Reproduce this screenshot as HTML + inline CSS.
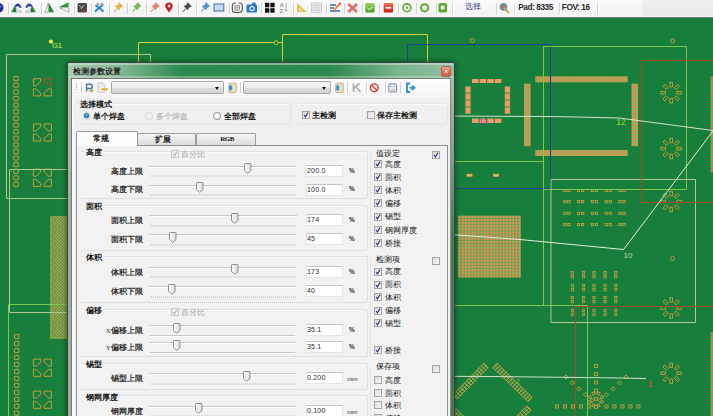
<!DOCTYPE html><html><head><meta charset="utf-8"><style>
*{box-sizing:border-box}
html,body{margin:0;padding:0}
body{width:713px;height:416px;overflow:hidden;position:relative;background:#177f3b;font-family:"Liberation Sans",sans-serif;}
.a{position:absolute}
.t{position:absolute;white-space:nowrap;line-height:1}
.sep{position:absolute;width:1px;background:#d2d2d2;box-shadow:1px 0 0 #fff}
.ed{position:absolute;background:#fff;border:1px solid #e6e6e6;border-top-color:#c6c6c6;font-size:8px;color:#2a2a2a;padding-left:0.5px;line-height:10.2px;letter-spacing:0.2px}
.ed span{display:inline-block;transform:scaleX(0.88);transform-origin:0 50%}
.trk{position:absolute;height:2px;border-top:1px solid #c9c9c9;border-bottom:1px solid #fff;background:#e6e6e6}
.ticks{position:absolute;height:2px;background:repeating-linear-gradient(90deg,#d4d4d4 0 1px,transparent 1px 2px)}
.grp{position:absolute;border:1px solid #e0e0e0;border-left:none;border-radius:0 3px 3px 0;box-shadow:inset 0 1px 0 #fbfbfb}
.tab{position:absolute;border:1px solid #9a9b9b;border-bottom:none;background:linear-gradient(#f6f6f6,#e8e8e8 50%,#dcdcdc);border-radius:2px 2px 0 0}
.combo{position:absolute;border:1px solid #a8a8a8;border-radius:2px;background:linear-gradient(#f6f6f6,#ececec 50%,#dcdcdc 51%,#d4d4d4)}
.combo::after{content:"";position:absolute;right:4px;top:5px;border-left:2.5px solid transparent;border-right:2.5px solid transparent;border-top:3px solid #111}
</style></head><body>
<svg class="a" style="left:0;top:0" width="713" height="416" viewBox="0 0 713 416"><defs>
<pattern id="hx" width="2.9" height="8" patternUnits="userSpaceOnUse" x="535.3"><rect width="2.9" height="8" fill="#5e9444"/><rect x="0" width="1.2" height="8" fill="#f0884c"/><rect x="1.55" width="0.9" height="8" fill="#c9c472"/></pattern>
<pattern id="hy" width="8" height="2.9" patternUnits="userSpaceOnUse" y="83.7"><rect width="8" height="2.9" fill="#5e9444"/><rect y="0" width="8" height="1.2" fill="#f0884c"/><rect y="1.55" width="8" height="0.9" fill="#c9c472"/></pattern>
<pattern id="bga" width="3.15" height="3.15" patternUnits="userSpaceOnUse" x="458" y="215.6"><rect width="3.15" height="3.15" fill="#6e9a48"/><rect x="0.7" y="0.7" width="1.75" height="1.75" fill="#f29060"/><rect x="0" y="0" width="3.15" height="0.5" fill="#b0b060"/></pattern>
<pattern id="bga2" width="6" height="6" patternUnits="userSpaceOnUse" x="50" y="216"><rect width="6" height="6" fill="#4e9442"/><circle cx="1.5" cy="1.5" r="1" fill="none" stroke="#d89a48" stroke-width="0.8"/><circle cx="4.5" cy="1.5" r="1" fill="none" stroke="#a8c060" stroke-width="0.8"/><circle cx="1.5" cy="4.5" r="1" fill="none" stroke="#b8c060" stroke-width="0.8"/><circle cx="4.5" cy="4.5" r="1" fill="none" stroke="#e08a50" stroke-width="0.8"/></pattern>
<pattern id="dg" width="3" height="8" patternUnits="userSpaceOnUse"><rect width="0.9" height="8" fill="#d6a44a"/></pattern>
<g id="ring" fill="none" stroke="#d9a040" stroke-width="0.8"><rect x="-1.3" y="-10.3" width="2.6" height="4.6" transform="rotate(0)"/><rect x="-1.3" y="-10.3" width="2.6" height="4.6" transform="rotate(45)"/><rect x="-1.3" y="-10.3" width="2.6" height="4.6" transform="rotate(90)"/><rect x="-1.3" y="-10.3" width="2.6" height="4.6" transform="rotate(135)"/><rect x="-1.3" y="-10.3" width="2.6" height="4.6" transform="rotate(180)"/><rect x="-1.3" y="-10.3" width="2.6" height="4.6" transform="rotate(225)"/><rect x="-1.3" y="-10.3" width="2.6" height="4.6" transform="rotate(270)"/><rect x="-1.3" y="-10.3" width="2.6" height="4.6" transform="rotate(315)"/></g>
</defs>
<rect x="13.8" y="76.50" width="4.4" height="4.2" rx="0.3" fill="none" stroke="#d9a040" stroke-width="0.9"/>
<rect x="13.8" y="83.12" width="4.4" height="4.2" rx="0.3" fill="none" stroke="#d9a040" stroke-width="0.9"/>
<rect x="13.8" y="89.74" width="4.4" height="4.2" rx="0.3" fill="none" stroke="#d9a040" stroke-width="0.9"/>
<rect x="13.8" y="96.36" width="4.4" height="4.2" rx="0.3" fill="none" stroke="#d9a040" stroke-width="0.9"/>
<rect x="13.8" y="102.98" width="4.4" height="4.2" rx="0.3" fill="none" stroke="#d9a040" stroke-width="0.9"/>
<rect x="13.8" y="109.60" width="4.4" height="4.2" rx="0.3" fill="none" stroke="#d9a040" stroke-width="0.9"/>
<rect x="13.8" y="116.22" width="4.4" height="4.2" rx="0.3" fill="none" stroke="#d9a040" stroke-width="0.9"/>
<rect x="13.8" y="122.84" width="4.4" height="4.2" rx="0.3" fill="none" stroke="#d9a040" stroke-width="0.9"/>
<rect x="13.8" y="129.46" width="4.4" height="4.2" rx="0.3" fill="none" stroke="#d9a040" stroke-width="0.9"/>
<rect x="13.8" y="136.08" width="4.4" height="4.2" rx="0.3" fill="none" stroke="#d9a040" stroke-width="0.9"/>
<rect x="13.8" y="142.70" width="4.4" height="4.2" rx="0.3" fill="none" stroke="#d9a040" stroke-width="0.9"/>
<rect x="13.8" y="149.32" width="4.4" height="4.2" rx="0.3" fill="none" stroke="#d9a040" stroke-width="0.9"/>
<rect x="13.8" y="155.94" width="4.4" height="4.2" rx="0.3" fill="none" stroke="#d9a040" stroke-width="0.9"/>
<rect x="13.8" y="162.56" width="4.4" height="4.2" rx="0.3" fill="none" stroke="#d9a040" stroke-width="0.9"/>
<rect x="13.8" y="169.18" width="4.4" height="4.2" rx="0.3" fill="none" stroke="#d9a040" stroke-width="0.9"/>
<rect x="13.8" y="175.80" width="4.4" height="4.2" rx="0.3" fill="none" stroke="#d9a040" stroke-width="0.9"/>
<rect x="13.8" y="182.42" width="4.4" height="4.2" rx="0.3" fill="none" stroke="#d9a040" stroke-width="0.9"/>
<rect x="14.5" y="334.60" width="4.4" height="4.2" rx="0.3" fill="none" stroke="#d9a040" stroke-width="0.9"/>
<rect x="14.5" y="341.55" width="4.4" height="4.2" rx="0.3" fill="none" stroke="#d9a040" stroke-width="0.9"/>
<rect x="14.5" y="348.50" width="4.4" height="4.2" rx="0.3" fill="none" stroke="#d9a040" stroke-width="0.9"/>
<rect x="14.5" y="355.45" width="4.4" height="4.2" rx="0.3" fill="none" stroke="#d9a040" stroke-width="0.9"/>
<rect x="14.5" y="362.40" width="4.4" height="4.2" rx="0.3" fill="none" stroke="#d9a040" stroke-width="0.9"/>
<rect x="14.5" y="369.35" width="4.4" height="4.2" rx="0.3" fill="none" stroke="#d9a040" stroke-width="0.9"/>
<rect x="14.5" y="376.30" width="4.4" height="4.2" rx="0.3" fill="none" stroke="#d9a040" stroke-width="0.9"/>
<rect x="14.5" y="383.25" width="4.4" height="4.2" rx="0.3" fill="none" stroke="#d9a040" stroke-width="0.9"/>
<rect x="14.5" y="390.20" width="4.4" height="4.2" rx="0.3" fill="none" stroke="#d9a040" stroke-width="0.9"/>
<rect x="14.5" y="397.15" width="4.4" height="4.2" rx="0.3" fill="none" stroke="#d9a040" stroke-width="0.9"/>
<rect x="14.5" y="404.10" width="4.4" height="4.2" rx="0.3" fill="none" stroke="#d9a040" stroke-width="0.9"/>
<rect x="14.5" y="411.05" width="4.4" height="4.2" rx="0.3" fill="none" stroke="#d9a040" stroke-width="0.9"/>
<g fill="none" stroke="#d9a040" stroke-width="0.9">
<path d="M33.40,78.70 H40.70 V81.50 L36.10,85.70 H33.40 Z"/>
<path d="M33.40,78.70 H40.70 V81.50 L36.10,85.70 H33.40 Z" transform="translate(84.8,0) scale(-1,1)" stroke="#c8462a"/>
<path d="M33.40,78.70 H40.70 V81.50 L36.10,85.70 H33.40 Z" transform="translate(0,174.6) scale(1,-1)"/>
<path d="M33.40,78.70 H40.70 V81.50 L36.10,85.70 H33.40 Z" transform="translate(84.8,174.6) scale(-1,-1)"/>
</g>
<g fill="none" stroke="#d9a040" stroke-width="0.9">
<path d="M33.40,123.90 H40.70 V126.70 L36.10,130.90 H33.40 Z"/>
<path d="M33.40,123.90 H40.70 V126.70 L36.10,130.90 H33.40 Z" transform="translate(84.8,0) scale(-1,1)" stroke="#d9a040"/>
<path d="M33.40,123.90 H40.70 V126.70 L36.10,130.90 H33.40 Z" transform="translate(0,265.0) scale(1,-1)"/>
<path d="M33.40,123.90 H40.70 V126.70 L36.10,130.90 H33.40 Z" transform="translate(84.8,265.0) scale(-1,-1)"/>
</g>
<g fill="none" stroke="#d9a040" stroke-width="0.9">
<path d="M33.40,169.20 H40.70 V172.00 L36.10,176.20 H33.40 Z"/>
<path d="M33.40,169.20 H40.70 V172.00 L36.10,176.20 H33.40 Z" transform="translate(84.8,0) scale(-1,1)" stroke="#d9a040"/>
<path d="M33.40,169.20 H40.70 V172.00 L36.10,176.20 H33.40 Z" transform="translate(0,355.6) scale(1,-1)"/>
<path d="M33.40,169.20 H40.70 V172.00 L36.10,176.20 H33.40 Z" transform="translate(84.8,355.6) scale(-1,-1)"/>
</g>
<g fill="none" stroke="#d9a040" stroke-width="0.9">
<path d="M33.40,359.10 H40.70 V361.90 L36.10,366.10 H33.40 Z"/>
<path d="M33.40,359.10 H40.70 V361.90 L36.10,366.10 H33.40 Z" transform="translate(84.8,0) scale(-1,1)" stroke="#d9a040"/>
<path d="M33.40,359.10 H40.70 V361.90 L36.10,366.10 H33.40 Z" transform="translate(0,735.4) scale(1,-1)"/>
<path d="M33.40,359.10 H40.70 V361.90 L36.10,366.10 H33.40 Z" transform="translate(84.8,735.4) scale(-1,-1)"/>
</g>
<g fill="none" stroke="#d9a040" stroke-width="0.9">
<path d="M33.40,391.10 H40.70 V393.90 L36.10,398.10 H33.40 Z"/>
<path d="M33.40,391.10 H40.70 V393.90 L36.10,398.10 H33.40 Z" transform="translate(84.8,0) scale(-1,1)" stroke="#d9a040"/>
<path d="M33.40,391.10 H40.70 V393.90 L36.10,398.10 H33.40 Z" transform="translate(0,799.4) scale(1,-1)"/>
<path d="M33.40,391.10 H40.70 V393.90 L36.10,398.10 H33.40 Z" transform="translate(84.8,799.4) scale(-1,-1)"/>
</g>
<rect x="50" y="216" width="20" height="123" fill="url(#bga2)"/>
<rect x="472.0" y="79" width="6.6" height="4" fill="#ec9a68"/>
<rect x="472.0" y="118.5" width="6.6" height="4.5" fill="#ec9a68"/>
<rect x="465.4" y="86.4" width="5.2" height="6.3" fill="#ec9a68"/>
<rect x="504.8" y="86.4" width="5.2" height="6.3" fill="#ec9a68"/>
<rect x="479.6" y="79" width="6.6" height="4" fill="#ec9a68"/>
<rect x="479.6" y="118.5" width="6.6" height="4.5" fill="#ec9a68"/>
<rect x="465.4" y="93.4" width="5.2" height="6.3" fill="#ec9a68"/>
<rect x="504.8" y="93.4" width="5.2" height="6.3" fill="#ec9a68"/>
<rect x="487.2" y="79" width="6.6" height="4" fill="#ec9a68"/>
<rect x="487.2" y="118.5" width="6.6" height="4.5" fill="#ec9a68"/>
<rect x="465.4" y="100.4" width="5.2" height="6.3" fill="#ec9a68"/>
<rect x="504.8" y="100.4" width="5.2" height="6.3" fill="#ec9a68"/>
<rect x="494.8" y="79" width="6.6" height="4" fill="#ec9a68"/>
<rect x="494.8" y="118.5" width="6.6" height="4.5" fill="#ec9a68"/>
<rect x="465.4" y="107.4" width="5.2" height="6.3" fill="#ec9a68"/>
<rect x="504.8" y="107.4" width="5.2" height="6.3" fill="#ec9a68"/>
<rect x="535.3" y="76.3" width="92.5" height="6" fill="url(#hx)"/>
<rect x="535.3" y="150" width="92.5" height="6" fill="url(#hx)"/>
<rect x="524" y="83.7" width="6.6" height="62.5" fill="url(#hy)"/>
<rect x="631.5" y="83.7" width="6.6" height="62.5" fill="url(#hy)"/>
<rect x="458" y="215.6" width="63" height="62" fill="url(#bga)"/>
<use href="#ring" x="671.2" y="92.7"/>
<use href="#ring" x="671.2" y="148.5"/>
<use href="#ring" x="671.2" y="201.5"/>
<use href="#ring" x="671.2" y="308"/>
<use href="#ring" x="671.2" y="373.3"/>
<rect x="710.5" y="76.5" width="3" height="96" fill="url(#hy)" opacity="0.75"/>
<rect x="710.5" y="332" width="3" height="84" fill="url(#hy)" opacity="0.75"/>
<rect x="466.5" y="173.8" width="6" height="3" fill="#e0a050"/><rect x="467.7" y="174.6" width="1.2" height="1.4" fill="#f0c880"/><rect x="470.1" y="174.6" width="1.2" height="1.4" fill="#f0c880"/>
<rect x="493" y="173.8" width="6" height="3" fill="#e0a050"/><rect x="494.2" y="174.6" width="1.2" height="1.4" fill="#f0c880"/><rect x="496.6" y="174.6" width="1.2" height="1.4" fill="#f0c880"/>
<rect x="563.8" y="189.5" width="2.4" height="2.2" fill="none" stroke="#d9a040" stroke-width="0.75"/><rect x="567.8" y="189.5" width="2.4" height="2.2" fill="none" stroke="#d9a040" stroke-width="0.75"/>
<rect x="577.4" y="189.5" width="2.4" height="2.2" fill="none" stroke="#d9a040" stroke-width="0.75"/><rect x="581.4" y="189.5" width="2.4" height="2.2" fill="none" stroke="#d9a040" stroke-width="0.75"/>
<rect x="591.1999999999999" y="189.5" width="2.4" height="2.2" fill="none" stroke="#d9a040" stroke-width="0.75"/><rect x="595.1999999999999" y="189.5" width="2.4" height="2.2" fill="none" stroke="#d9a040" stroke-width="0.75"/>
<rect x="605.0999999999999" y="189.5" width="2.4" height="2.2" fill="none" stroke="#d9a040" stroke-width="0.75"/><rect x="609.0999999999999" y="189.5" width="2.4" height="2.2" fill="none" stroke="#d9a040" stroke-width="0.75"/>
<rect x="618.8" y="189.5" width="2.4" height="2.2" fill="none" stroke="#d9a040" stroke-width="0.75"/><rect x="622.8" y="189.5" width="2.4" height="2.2" fill="none" stroke="#d9a040" stroke-width="0.75"/>
<rect x="563.8" y="200.6" width="2.4" height="2.2" fill="none" stroke="#d9a040" stroke-width="0.75"/><rect x="567.8" y="200.6" width="2.4" height="2.2" fill="none" stroke="#d9a040" stroke-width="0.75"/>
<rect x="577.4" y="200.6" width="2.4" height="2.2" fill="none" stroke="#d9a040" stroke-width="0.75"/><rect x="581.4" y="200.6" width="2.4" height="2.2" fill="none" stroke="#d9a040" stroke-width="0.75"/>
<rect x="591.1999999999999" y="200.6" width="2.4" height="2.2" fill="none" stroke="#d9a040" stroke-width="0.75"/><rect x="595.1999999999999" y="200.6" width="2.4" height="2.2" fill="none" stroke="#d9a040" stroke-width="0.75"/>
<rect x="605.0999999999999" y="200.6" width="2.4" height="2.2" fill="none" stroke="#d9a040" stroke-width="0.75"/><rect x="609.0999999999999" y="200.6" width="2.4" height="2.2" fill="none" stroke="#d9a040" stroke-width="0.75"/>
<rect x="618.8" y="200.6" width="2.4" height="2.2" fill="none" stroke="#d9a040" stroke-width="0.75"/><rect x="622.8" y="200.6" width="2.4" height="2.2" fill="none" stroke="#d9a040" stroke-width="0.75"/>
<rect x="563.8" y="212.20000000000002" width="2.4" height="2.2" fill="none" stroke="#d9a040" stroke-width="0.75"/><rect x="567.8" y="212.20000000000002" width="2.4" height="2.2" fill="none" stroke="#d9a040" stroke-width="0.75"/>
<rect x="577.4" y="212.20000000000002" width="2.4" height="2.2" fill="none" stroke="#d9a040" stroke-width="0.75"/><rect x="581.4" y="212.20000000000002" width="2.4" height="2.2" fill="none" stroke="#d9a040" stroke-width="0.75"/>
<rect x="591.1999999999999" y="212.20000000000002" width="2.4" height="2.2" fill="none" stroke="#d9a040" stroke-width="0.75"/><rect x="595.1999999999999" y="212.20000000000002" width="2.4" height="2.2" fill="none" stroke="#d9a040" stroke-width="0.75"/>
<rect x="605.0999999999999" y="212.20000000000002" width="2.4" height="2.2" fill="none" stroke="#d9a040" stroke-width="0.75"/><rect x="609.0999999999999" y="212.20000000000002" width="2.4" height="2.2" fill="none" stroke="#d9a040" stroke-width="0.75"/>
<rect x="618.8" y="212.20000000000002" width="2.4" height="2.2" fill="none" stroke="#d9a040" stroke-width="0.75"/><rect x="622.8" y="212.20000000000002" width="2.4" height="2.2" fill="none" stroke="#d9a040" stroke-width="0.75"/>
<rect x="563.8" y="223.5" width="2.4" height="2.2" fill="none" stroke="#d9a040" stroke-width="0.75"/><rect x="567.8" y="223.5" width="2.4" height="2.2" fill="none" stroke="#d9a040" stroke-width="0.75"/>
<rect x="577.4" y="223.5" width="2.4" height="2.2" fill="none" stroke="#d9a040" stroke-width="0.75"/><rect x="581.4" y="223.5" width="2.4" height="2.2" fill="none" stroke="#d9a040" stroke-width="0.75"/>
<rect x="591.1999999999999" y="223.5" width="2.4" height="2.2" fill="none" stroke="#d9a040" stroke-width="0.75"/><rect x="595.1999999999999" y="223.5" width="2.4" height="2.2" fill="none" stroke="#d9a040" stroke-width="0.75"/>
<rect x="605.0999999999999" y="223.5" width="2.4" height="2.2" fill="none" stroke="#d9a040" stroke-width="0.75"/><rect x="609.0999999999999" y="223.5" width="2.4" height="2.2" fill="none" stroke="#d9a040" stroke-width="0.75"/>
<rect x="618.8" y="223.5" width="2.4" height="2.2" fill="none" stroke="#d9a040" stroke-width="0.75"/><rect x="622.8" y="223.5" width="2.4" height="2.2" fill="none" stroke="#d9a040" stroke-width="0.75"/>
<rect x="571.1999999999999" y="271.6" width="2.2" height="2.4" fill="none" stroke="#d9a040" stroke-width="0.75"/><rect x="571.1999999999999" y="275.6" width="2.2" height="2.4" fill="none" stroke="#d9a040" stroke-width="0.75"/>
<rect x="582.4" y="271.6" width="2.2" height="2.4" fill="none" stroke="#d9a040" stroke-width="0.75"/><rect x="582.4" y="275.6" width="2.2" height="2.4" fill="none" stroke="#d9a040" stroke-width="0.75"/>
<rect x="592.9" y="271.6" width="2.2" height="2.4" fill="none" stroke="#d9a040" stroke-width="0.75"/><rect x="592.9" y="275.6" width="2.2" height="2.4" fill="none" stroke="#d9a040" stroke-width="0.75"/>
<rect x="603.9" y="271.6" width="2.2" height="2.4" fill="none" stroke="#d9a040" stroke-width="0.75"/><rect x="603.9" y="275.6" width="2.2" height="2.4" fill="none" stroke="#d9a040" stroke-width="0.75"/>
<rect x="614.6999999999999" y="271.6" width="2.2" height="2.4" fill="none" stroke="#d9a040" stroke-width="0.75"/><rect x="614.6999999999999" y="275.6" width="2.2" height="2.4" fill="none" stroke="#d9a040" stroke-width="0.75"/>
<rect x="571.1999999999999" y="284.5" width="2.2" height="2.4" fill="none" stroke="#d9a040" stroke-width="0.75"/><rect x="571.1999999999999" y="288.5" width="2.2" height="2.4" fill="none" stroke="#d9a040" stroke-width="0.75"/>
<rect x="582.4" y="284.5" width="2.2" height="2.4" fill="none" stroke="#d9a040" stroke-width="0.75"/><rect x="582.4" y="288.5" width="2.2" height="2.4" fill="none" stroke="#d9a040" stroke-width="0.75"/>
<rect x="592.9" y="284.5" width="2.2" height="2.4" fill="none" stroke="#d9a040" stroke-width="0.75"/><rect x="592.9" y="288.5" width="2.2" height="2.4" fill="none" stroke="#d9a040" stroke-width="0.75"/>
<rect x="603.9" y="284.5" width="2.2" height="2.4" fill="none" stroke="#d9a040" stroke-width="0.75"/><rect x="603.9" y="288.5" width="2.2" height="2.4" fill="none" stroke="#d9a040" stroke-width="0.75"/>
<rect x="614.6999999999999" y="284.5" width="2.2" height="2.4" fill="none" stroke="#d9a040" stroke-width="0.75"/><rect x="614.6999999999999" y="288.5" width="2.2" height="2.4" fill="none" stroke="#d9a040" stroke-width="0.75"/>
<rect x="571.1999999999999" y="296.40000000000003" width="2.2" height="2.4" fill="none" stroke="#d9a040" stroke-width="0.75"/><rect x="571.1999999999999" y="300.40000000000003" width="2.2" height="2.4" fill="none" stroke="#d9a040" stroke-width="0.75"/>
<rect x="582.4" y="296.40000000000003" width="2.2" height="2.4" fill="none" stroke="#d9a040" stroke-width="0.75"/><rect x="582.4" y="300.40000000000003" width="2.2" height="2.4" fill="none" stroke="#d9a040" stroke-width="0.75"/>
<rect x="592.9" y="296.40000000000003" width="2.2" height="2.4" fill="none" stroke="#d9a040" stroke-width="0.75"/><rect x="592.9" y="300.40000000000003" width="2.2" height="2.4" fill="none" stroke="#d9a040" stroke-width="0.75"/>
<rect x="603.9" y="296.40000000000003" width="2.2" height="2.4" fill="none" stroke="#d9a040" stroke-width="0.75"/><rect x="603.9" y="300.40000000000003" width="2.2" height="2.4" fill="none" stroke="#d9a040" stroke-width="0.75"/>
<rect x="614.6999999999999" y="296.40000000000003" width="2.2" height="2.4" fill="none" stroke="#d9a040" stroke-width="0.75"/><rect x="614.6999999999999" y="300.40000000000003" width="2.2" height="2.4" fill="none" stroke="#d9a040" stroke-width="0.75"/>
<rect x="571.1999999999999" y="309.1" width="2.2" height="2.4" fill="none" stroke="#d9a040" stroke-width="0.75"/><rect x="571.1999999999999" y="313.1" width="2.2" height="2.4" fill="none" stroke="#d9a040" stroke-width="0.75"/>
<rect x="582.4" y="309.1" width="2.2" height="2.4" fill="none" stroke="#d9a040" stroke-width="0.75"/><rect x="582.4" y="313.1" width="2.2" height="2.4" fill="none" stroke="#d9a040" stroke-width="0.75"/>
<rect x="592.9" y="309.1" width="2.2" height="2.4" fill="none" stroke="#d9a040" stroke-width="0.75"/><rect x="592.9" y="313.1" width="2.2" height="2.4" fill="none" stroke="#d9a040" stroke-width="0.75"/>
<rect x="603.9" y="309.1" width="2.2" height="2.4" fill="none" stroke="#d9a040" stroke-width="0.75"/><rect x="603.9" y="313.1" width="2.2" height="2.4" fill="none" stroke="#d9a040" stroke-width="0.75"/>
<rect x="614.6999999999999" y="309.1" width="2.2" height="2.4" fill="none" stroke="#d9a040" stroke-width="0.75"/><rect x="614.6999999999999" y="313.1" width="2.2" height="2.4" fill="none" stroke="#d9a040" stroke-width="0.75"/>
<g transform="translate(486,365.5) rotate(134.54)"><rect x="0" y="-3.0" width="44.2" height="6" fill="url(#dg)"/><rect x="0" y="-3.0" width="44.2" height="6" fill="none" stroke="#d6a44a" stroke-width="0.8"/><path d="M0,0 H44.2" stroke="#b7b85a" stroke-width="0.6"/></g>
<g transform="translate(495,365.5) rotate(44.17)"><rect x="0" y="-3.0" width="48.8" height="6" fill="url(#dg)"/><rect x="0" y="-3.0" width="48.8" height="6" fill="none" stroke="#d6a44a" stroke-width="0.8"/><path d="M0,0 H48.8" stroke="#b7b85a" stroke-width="0.6"/></g>
<g transform="translate(529,408) rotate(135.00)"><rect x="0" y="-3.0" width="15.6" height="6" fill="url(#dg)"/><rect x="0" y="-3.0" width="15.6" height="6" fill="none" stroke="#d6a44a" stroke-width="0.8"/><path d="M0,0 H15.6" stroke="#b7b85a" stroke-width="0.6"/></g>
<g transform="translate(452,409) rotate(45.00)"><rect x="0" y="-3.0" width="14.1" height="6" fill="url(#dg)"/><rect x="0" y="-3.0" width="14.1" height="6" fill="none" stroke="#d6a44a" stroke-width="0.8"/><path d="M0,0 H14.1" stroke="#b7b85a" stroke-width="0.6"/></g>
<rect x="594.6" y="364.5" width="3" height="3" fill="none" stroke="#d9a040" stroke-width="0.8"/>
<rect x="594.6" y="372.7" width="3" height="3" fill="none" stroke="#d9a040" stroke-width="0.8"/>
<rect x="594.6" y="380.9" width="3" height="3" fill="none" stroke="#d9a040" stroke-width="0.8"/>
<rect x="594.6" y="389.1" width="3" height="3" fill="none" stroke="#d9a040" stroke-width="0.8"/>
<rect x="594.6" y="397.3" width="3" height="3" fill="none" stroke="#d9a040" stroke-width="0.8"/>
<rect x="594.6" y="405.5" width="3" height="3" fill="none" stroke="#d9a040" stroke-width="0.8"/>
<rect x="555.5" y="405" width="3" height="3" fill="none" stroke="#d9a040" stroke-width="0.8"/>
<rect x="563.5" y="405" width="3" height="3" fill="none" stroke="#d9a040" stroke-width="0.8"/>
<rect x="571.5" y="405" width="3" height="3" fill="none" stroke="#d9a040" stroke-width="0.8"/>
<rect x="579.5" y="405" width="3" height="3" fill="none" stroke="#d9a040" stroke-width="0.8"/>
<rect x="587.5" y="405" width="3" height="3" fill="none" stroke="#d9a040" stroke-width="0.8"/>
<rect x="605" y="405" width="3" height="3" fill="none" stroke="#d9a040" stroke-width="0.8"/>
<rect x="613" y="405" width="3" height="3" fill="none" stroke="#d9a040" stroke-width="0.8"/>
<rect x="621" y="405" width="3" height="3" fill="none" stroke="#d9a040" stroke-width="0.8"/>
<rect x="629" y="405" width="3" height="3" fill="none" stroke="#d9a040" stroke-width="0.8"/>
<rect x="637" y="405" width="3" height="3" fill="none" stroke="#d9a040" stroke-width="0.8"/>
<rect x="564.5" y="375.5" width="3" height="3" fill="none" stroke="#d9a040" stroke-width="0.8" transform="rotate(45 566.0 377.0)"/>
<rect x="624.5" y="375.5" width="3" height="3" fill="none" stroke="#d9a040" stroke-width="0.8" transform="rotate(45 626.0 377.0)"/>
<rect x="571.0" y="381.35" width="3" height="3" fill="none" stroke="#d9a040" stroke-width="0.8" transform="rotate(45 572.5 382.85)"/>
<rect x="618.0" y="381.35" width="3" height="3" fill="none" stroke="#d9a040" stroke-width="0.8" transform="rotate(45 619.5 382.85)"/>
<rect x="577.5" y="387.2" width="3" height="3" fill="none" stroke="#d9a040" stroke-width="0.8" transform="rotate(45 579.0 388.7)"/>
<rect x="611.5" y="387.2" width="3" height="3" fill="none" stroke="#d9a040" stroke-width="0.8" transform="rotate(45 613.0 388.7)"/>
<rect x="584.0" y="393.05" width="3" height="3" fill="none" stroke="#d9a040" stroke-width="0.8" transform="rotate(45 585.5 394.55)"/>
<rect x="605.0" y="393.05" width="3" height="3" fill="none" stroke="#d9a040" stroke-width="0.8" transform="rotate(45 606.5 394.55)"/>
<rect x="590.5" y="398.9" width="3" height="3" fill="none" stroke="#d9a040" stroke-width="0.8" transform="rotate(45 592.0 400.4)"/>
<rect x="598.5" y="398.9" width="3" height="3" fill="none" stroke="#d9a040" stroke-width="0.8" transform="rotate(45 600.0 400.4)"/>
<rect x="600.71" y="400.69" width="2.6" height="2.6" fill="none" stroke="#d9a040" stroke-width="0.75" transform="rotate(22.5 602.01 401.99)"/>
<rect x="597.19" y="404.21" width="2.6" height="2.6" fill="none" stroke="#d9a040" stroke-width="0.75" transform="rotate(67.5 598.49 405.51)"/>
<rect x="592.21" y="404.21" width="2.6" height="2.6" fill="none" stroke="#d9a040" stroke-width="0.75" transform="rotate(112.5 593.51 405.51)"/>
<rect x="588.69" y="400.69" width="2.6" height="2.6" fill="none" stroke="#d9a040" stroke-width="0.75" transform="rotate(157.5 589.99 401.99)"/>
<rect x="588.69" y="395.71" width="2.6" height="2.6" fill="none" stroke="#d9a040" stroke-width="0.75" transform="rotate(202.5 589.99 397.01)"/>
<rect x="592.21" y="392.19" width="2.6" height="2.6" fill="none" stroke="#d9a040" stroke-width="0.75" transform="rotate(247.5 593.51 393.49)"/>
<rect x="597.19" y="392.19" width="2.6" height="2.6" fill="none" stroke="#d9a040" stroke-width="0.75" transform="rotate(292.5 598.49 393.49)"/>
<rect x="600.71" y="395.71" width="2.6" height="2.6" fill="none" stroke="#d9a040" stroke-width="0.75" transform="rotate(337.5 602.01 397.01)"/>
<circle cx="472.3" cy="40.5" r="2" fill="none" stroke="#d9a040" stroke-width="0.8"/>
<circle cx="672.8" cy="41" r="2" fill="none" stroke="#d9a040" stroke-width="0.8"/>
<circle cx="672.5" cy="258.4" r="2" fill="none" stroke="#d9a040" stroke-width="0.8"/>
<path d="M6.5,54.5 H150.5 V63" fill="none" stroke="#b0c98c" stroke-width="1"/>
<path d="M6.5,54.5 V198.5 H70" fill="none" stroke="#b0c98c" stroke-width="1"/>
<path d="M70,169.5 H9.5 V312.5 H70" fill="none" stroke="#b0c98c" stroke-width="1"/>
<path d="M70,304.5 H8.5 V416" fill="none" stroke="#80c454" stroke-width="1"/>
<path d="M138.5,63 V42.5 H274" fill="none" stroke="#cdd043" stroke-width="1"/>
<circle cx="276.2" cy="42.6" r="2" fill="none" stroke="#cdd043" stroke-width="0.9"/>
<path d="M278.2,42.5 H282.5" fill="none" stroke="#cdd043" stroke-width="1"/>
<path d="M282.5,63 V34.5 H427.5 V63" fill="none" stroke="#cdd043" stroke-width="1"/>
<path d="M407.5,63 V44.5 H550.5 V188.5 H440" fill="none" stroke="#1f3d8e" stroke-width="1"/>
<path d="M543.5,305.5 V46.5 H686.5 V189.5 H543.5" fill="none" stroke="#80c454" stroke-width="1"/>
<path d="M440,161.5 H543.5" fill="none" stroke="#80c454" stroke-width="1"/>
<path d="M440,305.5 H587.5 V416" fill="none" stroke="#80c454" stroke-width="1"/>
<path d="M551,322.5 V179.5 H695.5 V322.5 H551" fill="none" stroke="#b0c98c" stroke-width="1"/>
<path d="M641.5,202.5 V60.5 H713" fill="none" stroke="#a5492a" stroke-width="1"/>
<path d="M641.5,202.5 H713" fill="none" stroke="#a5492a" stroke-width="1"/>
<path d="M575.5,416 V306.5 H713" fill="none" stroke="#a5492a" stroke-width="1"/>
<path d="M440,116 L558,116.6 L619,118 L713,130.5" fill="none" stroke="#e4eed8" stroke-width="0.9"/>
<path d="M440,233.8 L520,239.5 L623.5,249.5 L713,131" fill="none" stroke="#e4eed8" stroke-width="1"/>
<path d="M440,376.3 L492,376.5 L607,377.8 L646,378.5" fill="none" stroke="#e4eed8" stroke-width="0.9"/>
<circle cx="51" cy="41.6" r="2.1" fill="#f0f040"/>
<text x="52" y="48.3" font-size="7.8" fill="#dde850" font-family="Liberation Sans" letter-spacing="-0.3">G1</text>
<text x="479.5" y="123.5" font-size="7" fill="#8a44d0" font-family="Liberation Sans">13</text>
<text x="616.3" y="125.3" font-size="8.5" fill="#72c444" font-family="Liberation Sans" font-weight="bold">12</text>
<text x="623.5" y="258" font-size="8" fill="#c0dc98" font-family="Liberation Sans">10</text>
<text x="647.5" y="387" font-size="8.5" fill="#d04a2a" font-family="Liberation Sans" font-weight="bold">1</text>
<text x="516" y="384" font-size="7" fill="#7ec24e" font-family="Liberation Sans">2</text></svg>
<div class="a" style="left:0;top:0;width:713px;height:17px;background:linear-gradient(#fafafa,#f2f2f2 85%,#fdfdfd)"></div>
<div class="a" style="left:642px;top:0;width:71px;height:16px;background:linear-gradient(#f0f0f0,#eaeaea)"></div>
<div class="a" style="left:0;top:17px;width:713px;height:1.3px;background:#7c7470"></div>
<div class="sep" style="left:7.8px;top:3px;height:11px"></div>
<div class="sep" style="left:40.7px;top:3px;height:11px"></div>
<div class="sep" style="left:73.9px;top:3px;height:11px"></div>
<div class="sep" style="left:90.7px;top:3px;height:11px"></div>
<div class="sep" style="left:109.0px;top:3px;height:11px"></div>
<div class="sep" style="left:127.3px;top:3px;height:11px"></div>
<div class="sep" style="left:145.6px;top:3px;height:11px"></div>
<div class="sep" style="left:177.6px;top:3px;height:11px"></div>
<div class="sep" style="left:195.9px;top:3px;height:11px"></div>
<div class="sep" style="left:228.7px;top:3px;height:11px"></div>
<div class="sep" style="left:261.3px;top:3px;height:11px"></div>
<div class="sep" style="left:292.9px;top:3px;height:11px"></div>
<div class="sep" style="left:325.7px;top:3px;height:11px"></div>
<div class="sep" style="left:344.2px;top:3px;height:11px"></div>
<div class="sep" style="left:361.5px;top:3px;height:11px"></div>
<div class="sep" style="left:379.0px;top:3px;height:11px"></div>
<div class="sep" style="left:398.0px;top:3px;height:11px"></div>
<div class="sep" style="left:416.4px;top:3px;height:11px"></div>
<div class="sep" style="left:435.7px;top:3px;height:11px"></div>
<div class="sep" style="left:452.1px;top:3px;height:11px"></div>
<div class="sep" style="left:495.7px;top:3px;height:11px"></div>
<div class="sep" style="left:514.4px;top:3px;height:11px"></div>
<div class="sep" style="left:558.6px;top:3px;height:11px"></div>
<div class="sep" style="left:596.5px;top:3px;height:11px"></div>
<div class="t" style="left:465.3px;top:3.2px;font-size:8.2px;color:#2e34a0;font-weight:500;">选择</div>
<div class="t" style="left:518.2px;top:2.8px;font-size:8.3px;color:#2a2a2a;font-weight:bold;letter-spacing:-0.45px">Pad: 8335</div>
<div class="t" style="left:561.8px;top:2.8px;font-size:8.3px;color:#2a2a2a;font-weight:bold;letter-spacing:-0.45px">FOV: 16</div>
<svg class="a" style="left:0;top:0" width="713" height="16" viewBox="0 0 713 16"><defs><linearGradient id="gg" x1="0" y1="0" x2="0" y2="1"><stop offset="0" stop-color="#9bd45a"/><stop offset="1" stop-color="#4f9a22"/></linearGradient><linearGradient id="rg" x1="0" y1="0" x2="0" y2="1"><stop offset="0" stop-color="#f07050"/><stop offset="1" stop-color="#c81e10"/></linearGradient><linearGradient id="tg2" x1="0" y1="0" x2="1" y2="0"><stop offset="0" stop-color="#4ab04a"/><stop offset="1" stop-color="#0a6a1a"/></linearGradient></defs><circle cx="-1.5" cy="7.7" r="5" fill="#1b2f96"/><circle cx="-0.5" cy="6.5" r="1.8" fill="#6f8ad8" opacity="0.7"/><path d="M11,12.2 L15.2,4.8 L16.4,12.2 Z" fill="url(#tg2)"/><path d="M14.8,5.6 Q16.3,2.8 18.8,3.6 Q20.6,4.6 21.6,7.6 Q20.6,8.6 19.6,7.4 Q18,5.4 15.8,7.2 Z" fill="#2a46a6"/><path d="M16.6,8.6 L21.6,11.9 L16.9,12.1 Z" fill="#fff" stroke="#909090" stroke-width="0.6"/><g transform="translate(47,0) scale(-1,1)"><path d="M11,12.2 L15.2,4.8 L16.4,12.2 Z" fill="url(#tg2)"/><path d="M14.8,5.6 Q16.3,2.8 18.8,3.6 Q20.6,4.6 21.6,7.6 Q20.6,8.6 19.6,7.4 Q18,5.4 15.8,7.2 Z" fill="#2a46a6"/><path d="M16.6,8.6 L21.6,11.9 L16.9,12.1 Z" fill="#fff" stroke="#909090" stroke-width="0.6"/></g><path d="M48.3,3 L45.2,12.3 L48.3,12.3 Z" fill="#fff" stroke="#7a7a7a" stroke-width="0.6"/><path d="M48.8,3 L54,12.2 L48.8,12.2 Z" fill="#1f8a2a"/><path d="M68.5,2.3 L59,7 L68.5,7.3 Z" fill="#2a9a30"/><path d="M59.5,7.8 L68.8,7.8 L68.8,12 Z" fill="#fff" stroke="#7a7a7a" stroke-width="0.6"/><rect x="77.5" y="3" width="9.5" height="9.5" rx="1.5" fill="#4a4646"/><path d="M79,5 L82,8 M84,5 L81,9" stroke="#ddd" stroke-width="0.8"/><path d="M83,9 L86,12 L84,12 Z" fill="#e02020"/><path d="M95,11.5 L103,4.5 M95.5,5 L103.5,11.5" stroke="#2f8ad0" stroke-width="2.2"/><path d="M97,3 L99,5 M101,3 L103,5" stroke="#8a8a8a" stroke-width="1.4"/><g transform="translate(113.6,0)"><path d="M5.5,2.5 L9.2,6.2 L7.8,6.8 L5.8,8.8 L5.6,10 L1.8,6.2 L3.0,6 L5.0,4 Z" fill="#f2b43a" stroke="#c88a20" stroke-width="0.4"/><path d="M3.5,8.5 L0.8,11.8" stroke="#c88a20" stroke-width="0.9"/></g><g transform="translate(131.9,0)"><path d="M5.5,2.5 L9.2,6.2 L7.8,6.8 L5.8,8.8 L5.6,10 L1.8,6.2 L3.0,6 L5.0,4 Z" fill="#72bf52" stroke="#3f8f2a" stroke-width="0.4"/><path d="M3.5,8.5 L0.8,11.8" stroke="#3f8f2a" stroke-width="0.9"/></g><g transform="translate(150.2,0)"><path d="M5.5,2.5 L9.2,6.2 L7.8,6.8 L5.8,8.8 L5.6,10 L1.8,6.2 L3.0,6 L5.0,4 Z" fill="#e8806a" stroke="#b85a48" stroke-width="0.4"/><path d="M3.5,8.5 L0.8,11.8" stroke="#b85a48" stroke-width="0.9"/></g><g transform="translate(182.2,0)"><path d="M5.5,2.5 L9.2,6.2 L7.8,6.8 L5.8,8.8 L5.6,10 L1.8,6.2 L3.0,6 L5.0,4 Z" fill="#4a4a4a" stroke="#222" stroke-width="0.4"/><path d="M3.5,8.5 L0.8,11.8" stroke="#222" stroke-width="0.9"/></g><g transform="translate(200.5,0)"><path d="M5.5,2.5 L9.2,6.2 L7.8,6.8 L5.8,8.8 L5.6,10 L1.8,6.2 L3.0,6 L5.0,4 Z" fill="#4a9ad8" stroke="#2a6ab0" stroke-width="0.4"/><path d="M3.5,8.5 L0.8,11.8" stroke="#2a6ab0" stroke-width="0.9"/></g><path d="M169,12.5 Q165.2,7.5 165.2,6.2 A3.8,3.8 0 1 1 172.8,6.2 Q172.8,7.5 169,12.5 Z" fill="#d42222"/><circle cx="169" cy="6.1" r="1.3" fill="#fff"/><rect x="214" y="4" width="9.8" height="7" fill="#c4dcf2" stroke="#3a6ea6" stroke-width="1"/><rect x="232.3" y="3" width="10" height="9.5" rx="3" fill="none" stroke="#555" stroke-width="1.1"/><rect x="235" y="5.5" width="4.6" height="4.6" fill="none" stroke="#777" stroke-width="0.7"/><path d="M237.3,5.5 V10.1 M235,7.8 H239.6" stroke="#777" stroke-width="0.6"/><rect x="236" y="2" width="2.6" height="2" fill="#f4f4f4"/><rect x="246.5" y="4.5" width="10.5" height="8" rx="1.3" fill="#2a7cc8"/><rect x="252" y="2.6" width="3.6" height="2.4" fill="#2a7cc8"/><circle cx="252" cy="8.6" r="2.6" fill="#fff"/><circle cx="252" cy="8.6" r="1.6" fill="#2a7cc8"/><rect x="265" y="2.8" width="4.3" height="4.5" fill="#111"/><rect x="270.3" y="2.8" width="4.3" height="4.5" fill="#111"/><rect x="265" y="8.2" width="4.3" height="4.5" fill="#111"/><rect x="270.3" y="8.2" width="4.3" height="4.5" fill="#111"/><text x="279.8" y="7.3" font-size="5.5" fill="#8a8a8a" font-family="Liberation Sans" font-weight="bold">A</text><text x="279.8" y="12.8" font-size="5.5" fill="#8a8a8a" font-family="Liberation Sans" font-weight="bold">Z</text><path d="M286,3 V11 M284.8,9.8 L286,11.3 L287.2,9.8" stroke="#8a8a8a" stroke-width="0.7" fill="none"/><path d="M297,3 L306.8,12 L297,12 Z" fill="#e8bf55"/><path d="M299,8 L301.6,10.5 L299,10.5 Z" fill="#fafafa"/><g stroke="#c8c8c8" stroke-width="0.8"><path d="M311.5,2.8 V12.5"/><path d="M314.0,2.8 V12.5"/><path d="M316.5,2.8 V12.5"/><path d="M319.0,2.8 V12.5"/><path d="M321.5,2.8 V12.5"/><path d="M311.5,3.0 H321.8"/><path d="M311.5,5.4 H321.8"/><path d="M311.5,7.8 H321.8"/><path d="M311.5,10.2 H321.8"/><path d="M311.5,12.6 H321.8"/></g><path d="M330,5 H336 M330,8 H334 M330,11 H340" stroke="#2f6ab8" stroke-width="1.3"/><path d="M333,10 L339,3 L340.5,4.5 L334.5,11 Z" fill="#f08a30"/><path d="M338.5,3.5 L340,2.2 L341.2,3.5 L340,5 Z" fill="#e04a6a"/><path d="M348.3,4 L357,12 M357,4 L348.3,12" stroke="#e46a66" stroke-width="2.6"/><rect x="365.3" y="3" width="9.4" height="9.5" rx="1" fill="url(#gg)"/><path d="M367.5,8 L369.5,9.8 L372.5,6.5" stroke="#fff" stroke-width="1" fill="none"/><rect x="383.7" y="3" width="9.4" height="9.5" rx="1" fill="url(#rg)"/><rect x="385.7" y="7" width="5.4" height="1.6" fill="#fff"/><circle cx="407" cy="7.8" r="3.9" fill="none" stroke="#5aaa2a" stroke-width="1.6"/><circle cx="407" cy="7.8" r="1.2" fill="#5aaa2a"/><circle cx="424.6" cy="7.8" r="3.6" fill="none" stroke="#5aaa2a" stroke-width="2"/><rect x="438.4" y="3" width="8.7" height="9.5" rx="2" fill="#5aaa30"/><rect x="440.8" y="5.6" width="3.9" height="4" rx="0.8" fill="#e6f4d8"/><path d="M506,10 L509,12.8" stroke="#c9a23a" stroke-width="1.8"/><circle cx="503.5" cy="6.8" r="3.6" fill="#5c8fb0" stroke="#888" stroke-width="0.6"/><path d="M502,6 L504.5,5 L505,8 L503,9 Z" fill="#f06a20"/><path d="M503.5,8 L505.5,7.5 L504.8,9.8 Z" fill="#f0d020"/></svg>
<div class="a" style="left:67px;top:62px;width:388px;height:370px;border:1px solid #34463a;border-radius:3px 3px 0 0;box-shadow:0 0 5px 1px rgba(0,20,0,.45);background:linear-gradient(90deg,rgba(226,234,228,.7) 0%,rgba(226,234,228,.52) 14%,rgba(226,234,228,.26) 24%,rgba(226,234,228,.1) 29%,rgba(226,234,228,.09) 50%,rgba(226,234,228,.1) 68%,rgba(226,234,228,.32) 78%,rgba(226,234,228,.5) 86%,rgba(226,234,228,.6) 100%)"></div>
<div class="a" style="left:68px;top:63px;width:386px;height:1.5px;background:rgba(220,228,222,.5)"></div>
<div class="a" style="left:68px;top:76px;width:386px;height:2px;background:rgba(225,232,226,.35)"></div>
<div class="a" style="left:68px;top:78px;width:4px;height:345px;background:linear-gradient(#b4c4b8,#a2aca6 40%,#9eaaa2)"></div>
<div class="a" style="left:451px;top:78px;width:3px;height:345px;background:linear-gradient(#a9c0ae,#7c9c84 25%,#4f7a5a 45%,#4a7656)"></div>
<div class="t" style="left:73.4px;top:68.2px;font-size:7.5px;color:#1a1e1b;font-weight:bold;text-shadow:0 0 2px rgba(255,255,255,.55)">检测参数设置</div>
<div class="a" style="left:441px;top:66px;width:10px;height:11px;border:1px solid #b06050;border-radius:2px;background:linear-gradient(#f0a494,#e0705c 50%,#d45e4a)"></div>
<svg class="a" style="left:441px;top:66px" width="10" height="11"><path d="M3.8,4.2 L6.4,6.8 M6.4,4.2 L3.8,6.8" stroke="#fff" stroke-width="1"/></svg>
<div class="a" style="left:71px;top:78px;width:380px;height:345px;background:#f0f0f0;border:1px solid #6f7d73;border-right-color:#8a8f8c"></div>
<div class="a" style="left:72px;top:98px;width:2px;height:325px;background:#fafafa"></div>
<div class="a" style="left:72px;top:79px;width:378px;height:19px;background:linear-gradient(#fdfdfd,#f3f3f3)"></div>
<div class="a" style="left:75.5px;top:82.5px;width:1px;height:1px;background:#a8a8a8"></div>
<div class="a" style="left:75.5px;top:84.7px;width:1px;height:1px;background:#a8a8a8"></div>
<div class="a" style="left:75.5px;top:86.9px;width:1px;height:1px;background:#a8a8a8"></div>
<div class="a" style="left:75.5px;top:89.1px;width:1px;height:1px;background:#a8a8a8"></div>
<div class="sep" style="left:80.8px;top:82px;height:11px"></div>
<div class="combo" style="left:111px;top:80.5px;width:112.5px;height:13.5px"></div>
<div class="combo" style="left:243px;top:80.5px;width:87.5px;height:13.5px"></div>
<div class="sep" style="left:240px;top:82px;height:11px"></div>
<div class="sep" style="left:347px;top:82px;height:11px"></div>
<div class="sep" style="left:366px;top:82px;height:11px"></div>
<div class="sep" style="left:385px;top:82px;height:11px"></div>
<div class="sep" style="left:400px;top:82px;height:11px"></div>
<svg class="a" style="left:0;top:78px" width="713" height="20" viewBox="0 78 713 20"><path d="M86.6,91.5 V84.3 H90 Q92.4,84.3 92.4,86.4 Q92.4,88.5 90,88.5 H86.6" fill="none" stroke="#4a76a2" stroke-width="1.4"/><circle cx="91.8" cy="90.6" r="1.6" fill="#86c050"/><circle cx="89.6" cy="91.2" r="0.9" fill="#f0a860"/><path d="M97.8,82.8 H102.5 L104.8,85.2 V92.2 H97.8 Z" fill="#ececec" stroke="#b8b8b8" stroke-width="0.7"/><rect x="101.5" y="88.2" width="6.5" height="2" rx="0.8" fill="#f0b020"/><rect x="228.6" y="83" width="8" height="9.5" rx="1.2" fill="#e9dfb8" stroke="#a89a70" stroke-width="0.6"/><path d="M230.6,84.5 Q228.6,86 228.8,88 Q229.2,90.5 230.8,91 Q232.6,89.5 232.4,87.5 Q232.2,85.5 230.6,84.5 Z" fill="#3a9ad8"/><rect x="335.6" y="83" width="8" height="9.5" rx="1.2" fill="#e9dfb8" stroke="#a89a70" stroke-width="0.6"/><path d="M337.6,84.5 Q335.6,86 335.8,88 Q336.2,90.5 337.8,91 Q339.6,89.5 339.4,87.5 Q339.2,85.5 337.6,84.5 Z" fill="#3a9ad8"/><path d="M353.5,83.5 V92 M353.5,88.5 L359.5,83.5 M356,87 L360.5,92" stroke="#b0b0b0" stroke-width="1.8" fill="none"/><circle cx="374.3" cy="87.8" r="3.9" fill="none" stroke="#d83a30" stroke-width="1.4"/><path d="M371.6,85.1 L377,90.5" stroke="#d83a30" stroke-width="1.4"/><rect x="388.8" y="83.8" width="7.8" height="8.2" rx="0.8" fill="#eef2f8" stroke="#6f8cb4" stroke-width="1"/><rect x="390.6" y="84.2" width="4.2" height="2.6" fill="#fff" stroke="#8aa2c4" stroke-width="0.6"/><rect x="390.4" y="89" width="4.6" height="2.4" fill="#d8a888" opacity="0.6"/><path d="M410,83.5 H407 V92 H410" fill="none" stroke="#2f8ac8" stroke-width="1.8"/><path d="M409.5,87.8 H414 M412,85.6 L414.6,87.8 L412,90" stroke="#2f9ad0" stroke-width="1.7" fill="none"/></svg>
<svg width="0" height="0" style="position:absolute"><defs><linearGradient id="cbgn" x1="0" y1="0" x2="1" y2="1"><stop offset="0" stop-color="#d8d8d8"/><stop offset="1" stop-color="#fbfbfb"/></linearGradient><linearGradient id="cbgdis" x1="0" y1="0" x2="1" y2="1"><stop offset="0" stop-color="#ececec"/><stop offset="1" stop-color="#f8f8f8"/></linearGradient><linearGradient id="tg" x1="0" x2="1"><stop offset="0" stop-color="#fdfdfd"/><stop offset="1" stop-color="#d9d9d9"/></linearGradient></defs></svg>
<div class="grp" style="left:77px;top:103px;width:214px;height:22px;border-color:#e6e6e6"></div>
<div class="grp" style="left:297px;top:103px;width:151px;height:22px;border-color:#e6e6e6"></div>
<div class="a" style="left:79px;top:99px;width:34px;height:8px;background:#f0f0f0"></div>
<div class="t" style="left:80px;top:100.7px;font-size:8px;color:#141414;font-weight:bold;">选择模式</div>
<div class="a" style="left:82.7px;top:112.0px;width:7.6px;height:7.6px;border-radius:50%;border:1px solid #c4c8d0;background:radial-gradient(circle at 40% 35%,#fff,#e4e4e4)"></div>
<div class="a" style="left:83.8px;top:113.1px;width:5.4px;height:5.4px;border-radius:50%;background:radial-gradient(circle at 50% 40%,#5cc4e4,#1a6aa0 60%,#0c3a70)"></div>
<div class="t" style="left:93px;top:113.2px;font-size:7.7px;color:#141414;font-weight:bold;">单个焊盘</div>
<div class="a" style="left:145.0px;top:112.4px;width:7.6px;height:7.6px;border-radius:50%;border:1px solid #d2d2d2;background:#f4f4f4"></div>
<div class="t" style="left:156px;top:113.2px;font-size:7.7px;color:#a8a8a8;font-weight:normal;">多个焊盘</div>
<div class="a" style="left:213.2px;top:112.4px;width:7.6px;height:7.6px;border-radius:50%;border:1px solid #8e8e8e;background:radial-gradient(circle at 40% 35%,#fff,#e4e4e4)"></div>
<div class="t" style="left:224px;top:113.2px;font-size:7.7px;color:#141414;font-weight:bold;">全部焊盘</div>
<svg class="a" style="left:301.8px;top:111.3px" width="8" height="8" viewBox="0 0 8 8"><rect x="0.5" y="0.5" width="7" height="7" fill="url(#cbgn)" stroke="#a5a5a5" stroke-width="1"/><path d="M2,4 L3.4,5.9 L6.1,1.6" fill="none" stroke="#26388e" stroke-width="1.1"/></svg>
<div class="t" style="left:312px;top:112.3px;font-size:7.8px;color:#141414;font-weight:bold;">主检测</div>
<svg class="a" style="left:366.8px;top:111.3px" width="8" height="8" viewBox="0 0 8 8"><rect x="0.5" y="0.5" width="7" height="7" fill="url(#cbgn)" stroke="#a5a5a5" stroke-width="1"/></svg>
<div class="t" style="left:377px;top:112.3px;font-size:7.8px;color:#141414;font-weight:bold;">保存主检测</div>
<div class="a" style="left:76px;top:144.5px;width:372px;height:280px;border:1px solid #8e8f8f;background:#f2f2f2"></div>
<div class="tab" style="left:137px;top:132.5px;width:59px;height:12.5px"></div>
<div class="tab" style="left:195.5px;top:132.5px;width:60px;height:12.5px"></div>
<div class="tab" style="left:75.5px;top:131px;width:62px;height:15px;background:#fcfcfc"></div>
<div class="t" style="left:92.5px;top:135.1px;font-size:7.8px;color:#141414;font-weight:bold;">常规</div>
<div class="t" style="left:155px;top:136.0px;font-size:7.8px;color:#141414;font-weight:bold;">扩展</div>
<div class="t" style="left:220.3px;top:135.6px;font-size:7px;color:#1a1a1a;font-weight:bold;font-family:'Liberation Serif',serif;letter-spacing:-0.5px">RGB</div>
<div class="grp" style="left:80.5px;top:150.5px;width:287px;height:48.5px"></div>
<div class="grp" style="left:80.5px;top:204.5px;width:287px;height:46.0px"></div>
<div class="grp" style="left:80.5px;top:255.5px;width:287px;height:47.5px"></div>
<div class="grp" style="left:80.5px;top:308.5px;width:287px;height:48.5px"></div>
<div class="grp" style="left:80.5px;top:362.5px;width:287px;height:27.0px"></div>
<div class="grp" style="left:80.5px;top:395px;width:287px;height:35px"></div>
<div class="a" style="left:84px;top:147.3px;width:20px;height:10px;background:#f2f2f2"></div>
<div class="t" style="left:86px;top:149.0px;font-size:8px;color:#141414;font-weight:bold;">高度</div>
<div class="a" style="left:84px;top:201.1px;width:20px;height:10px;background:#f2f2f2"></div>
<div class="t" style="left:86px;top:202.8px;font-size:8px;color:#141414;font-weight:bold;">面积</div>
<div class="a" style="left:84px;top:252.5px;width:20px;height:10px;background:#f2f2f2"></div>
<div class="t" style="left:86px;top:254.2px;font-size:8px;color:#141414;font-weight:bold;">体积</div>
<div class="a" style="left:84px;top:305.5px;width:20px;height:10px;background:#f2f2f2"></div>
<div class="t" style="left:86px;top:307.2px;font-size:8px;color:#141414;font-weight:bold;">偏移</div>
<div class="a" style="left:84px;top:359.3px;width:20px;height:10px;background:#f2f2f2"></div>
<div class="t" style="left:86px;top:361.0px;font-size:8px;color:#141414;font-weight:bold;">锡型</div>
<div class="a" style="left:84px;top:391.9px;width:36px;height:10px;background:#f2f2f2"></div>
<div class="t" style="left:86px;top:393.6px;font-size:8px;color:#141414;font-weight:bold;">钢网厚度</div>
<svg class="a" style="left:170.8px;top:150.2px" width="8" height="8" viewBox="0 0 8 8"><rect x="0.5" y="0.5" width="7" height="7" fill="url(#cbgdis)" stroke="#c9c9c9" stroke-width="1"/><path d="M2,4 L3.4,5.9 L6.1,1.6" fill="none" stroke="#b4b4b4" stroke-width="1.1"/></svg>
<div class="t" style="left:181.4px;top:151.0px;font-size:7.8px;color:#a2a2a2;font-weight:500;">百分比</div>
<svg class="a" style="left:170.8px;top:307.9px" width="8" height="8" viewBox="0 0 8 8"><rect x="0.5" y="0.5" width="7" height="7" fill="url(#cbgdis)" stroke="#c9c9c9" stroke-width="1"/><path d="M2,4 L3.4,5.9 L6.1,1.6" fill="none" stroke="#b4b4b4" stroke-width="1.1"/></svg>
<div class="t" style="left:181.4px;top:308.7px;font-size:7.8px;color:#a2a2a2;font-weight:500;">百分比</div>
<div class="t" style="left:110.69999999999999px;top:167.7px;font-size:7.75px;color:#303030;font-weight:bold;">高度上限</div>
<div class="trk" style="left:148.5px;top:165.9px;width:148.5px"></div>
<div class="ticks" style="left:151px;top:175.4px;width:145px"></div>
<svg class="a" style="left:244.2px;top:163.4px" width="8" height="11" viewBox="0 0 8 11"><path d="M0.5,1.2 Q0.5,0.5 1.2,0.5 H6.3 Q7,0.5 7,1.2 V7.5 L3.75,10.3 L0.5,7.5 Z" fill="url(#tg)" stroke="#858585" stroke-width="0.9"/></svg>
<div class="ed" style="left:305.8px;top:164.9px;width:37px;height:12px"><span>200.0</span></div>
<div class="t" style="left:348.9px;top:167.6px;font-size:6.4px;color:#2a2a2a;font-weight:bold;letter-spacing:-0.3px">%</div>
<div class="t" style="left:110.69999999999999px;top:186.3px;font-size:7.75px;color:#303030;font-weight:bold;">高度下限</div>
<div class="trk" style="left:148.5px;top:184.5px;width:148.5px"></div>
<div class="ticks" style="left:151px;top:194.0px;width:145px"></div>
<svg class="a" style="left:195.5px;top:182.0px" width="8" height="11" viewBox="0 0 8 11"><path d="M0.5,1.2 Q0.5,0.5 1.2,0.5 H6.3 Q7,0.5 7,1.2 V7.5 L3.75,10.3 L0.5,7.5 Z" fill="url(#tg)" stroke="#858585" stroke-width="0.9"/></svg>
<div class="ed" style="left:305.8px;top:183.5px;width:37px;height:12px"><span>100.0</span></div>
<div class="t" style="left:348.9px;top:186.2px;font-size:6.4px;color:#2a2a2a;font-weight:bold;letter-spacing:-0.3px">%</div>
<div class="t" style="left:110.69999999999999px;top:217.1px;font-size:7.75px;color:#303030;font-weight:bold;">面积上限</div>
<div class="trk" style="left:148.5px;top:215.3px;width:148.5px"></div>
<div class="ticks" style="left:151px;top:224.8px;width:145px"></div>
<svg class="a" style="left:231.0px;top:212.8px" width="8" height="11" viewBox="0 0 8 11"><path d="M0.5,1.2 Q0.5,0.5 1.2,0.5 H6.3 Q7,0.5 7,1.2 V7.5 L3.75,10.3 L0.5,7.5 Z" fill="url(#tg)" stroke="#858585" stroke-width="0.9"/></svg>
<div class="ed" style="left:305.8px;top:214.3px;width:37px;height:12px"><span>174</span></div>
<div class="t" style="left:348.9px;top:217.0px;font-size:6.4px;color:#2a2a2a;font-weight:bold;letter-spacing:-0.3px">%</div>
<div class="t" style="left:110.69999999999999px;top:235.9px;font-size:7.75px;color:#303030;font-weight:bold;">面积下限</div>
<div class="trk" style="left:148.5px;top:234.1px;width:148.5px"></div>
<div class="ticks" style="left:151px;top:243.6px;width:145px"></div>
<svg class="a" style="left:169.0px;top:231.6px" width="8" height="11" viewBox="0 0 8 11"><path d="M0.5,1.2 Q0.5,0.5 1.2,0.5 H6.3 Q7,0.5 7,1.2 V7.5 L3.75,10.3 L0.5,7.5 Z" fill="url(#tg)" stroke="#858585" stroke-width="0.9"/></svg>
<div class="ed" style="left:305.8px;top:233.1px;width:37px;height:12px"><span>45</span></div>
<div class="t" style="left:348.9px;top:235.8px;font-size:6.4px;color:#2a2a2a;font-weight:bold;letter-spacing:-0.3px">%</div>
<div class="t" style="left:110.69999999999999px;top:268.7px;font-size:7.75px;color:#303030;font-weight:bold;">体积上限</div>
<div class="trk" style="left:148.5px;top:266.9px;width:148.5px"></div>
<div class="ticks" style="left:151px;top:276.4px;width:145px"></div>
<svg class="a" style="left:230.5px;top:264.4px" width="8" height="11" viewBox="0 0 8 11"><path d="M0.5,1.2 Q0.5,0.5 1.2,0.5 H6.3 Q7,0.5 7,1.2 V7.5 L3.75,10.3 L0.5,7.5 Z" fill="url(#tg)" stroke="#858585" stroke-width="0.9"/></svg>
<div class="ed" style="left:305.8px;top:265.9px;width:37px;height:12px"><span>173</span></div>
<div class="t" style="left:348.9px;top:268.6px;font-size:6.4px;color:#2a2a2a;font-weight:bold;letter-spacing:-0.3px">%</div>
<div class="t" style="left:110.69999999999999px;top:287.8px;font-size:7.75px;color:#303030;font-weight:bold;">体积下限</div>
<div class="trk" style="left:148.5px;top:286px;width:148.5px"></div>
<div class="ticks" style="left:151px;top:295.5px;width:145px"></div>
<svg class="a" style="left:167.5px;top:283.5px" width="8" height="11" viewBox="0 0 8 11"><path d="M0.5,1.2 Q0.5,0.5 1.2,0.5 H6.3 Q7,0.5 7,1.2 V7.5 L3.75,10.3 L0.5,7.5 Z" fill="url(#tg)" stroke="#858585" stroke-width="0.9"/></svg>
<div class="ed" style="left:305.8px;top:285px;width:37px;height:12px"><span>40</span></div>
<div class="t" style="left:348.9px;top:287.7px;font-size:6.4px;color:#2a2a2a;font-weight:bold;letter-spacing:-0.3px">%</div>
<div class="t" style="left:106.1px;top:326.9px;font-size:7.75px;color:#303030;font-weight:bold;"><span style='font-family:Liberation Serif;font-size:6.5px;font-weight:normal'>X</span>偏移上限</div>
<div class="trk" style="left:148.5px;top:325.1px;width:148.5px"></div>
<div class="trk" style="left:150px;top:334.6px;width:145px"></div>
<svg class="a" style="left:172.9px;top:322.6px" width="8" height="11" viewBox="0 0 8 11"><path d="M0.5,1.2 Q0.5,0.5 1.2,0.5 H6.3 Q7,0.5 7,1.2 V7.5 L3.75,10.3 L0.5,7.5 Z" fill="url(#tg)" stroke="#858585" stroke-width="0.9"/></svg>
<div class="ed" style="left:305.8px;top:324.1px;width:37px;height:12px"><span>35.1</span></div>
<div class="t" style="left:348.9px;top:326.8px;font-size:6.4px;color:#2a2a2a;font-weight:bold;letter-spacing:-0.3px">%</div>
<div class="t" style="left:106.1px;top:344.0px;font-size:7.75px;color:#303030;font-weight:bold;"><span style='font-family:Liberation Serif;font-size:6.5px;font-weight:normal'>Y</span>偏移上限</div>
<div class="trk" style="left:148.5px;top:342.2px;width:148.5px"></div>
<div class="trk" style="left:150px;top:351.7px;width:145px"></div>
<svg class="a" style="left:172.9px;top:339.7px" width="8" height="11" viewBox="0 0 8 11"><path d="M0.5,1.2 Q0.5,0.5 1.2,0.5 H6.3 Q7,0.5 7,1.2 V7.5 L3.75,10.3 L0.5,7.5 Z" fill="url(#tg)" stroke="#858585" stroke-width="0.9"/></svg>
<div class="ed" style="left:305.8px;top:341.2px;width:37px;height:12px"><span>35.1</span></div>
<div class="t" style="left:348.9px;top:343.9px;font-size:6.4px;color:#2a2a2a;font-weight:bold;letter-spacing:-0.3px">%</div>
<div class="t" style="left:110.69999999999999px;top:375.1px;font-size:7.75px;color:#303030;font-weight:bold;">锡型上限</div>
<div class="trk" style="left:148.5px;top:373.3px;width:148.5px"></div>
<div class="ticks" style="left:151px;top:382.8px;width:145px"></div>
<svg class="a" style="left:243.2px;top:370.8px" width="8" height="11" viewBox="0 0 8 11"><path d="M0.5,1.2 Q0.5,0.5 1.2,0.5 H6.3 Q7,0.5 7,1.2 V7.5 L3.75,10.3 L0.5,7.5 Z" fill="url(#tg)" stroke="#858585" stroke-width="0.9"/></svg>
<div class="ed" style="left:305.8px;top:372.3px;width:37px;height:12px"><span>0.200</span></div>
<div class="t" style="left:347.2px;top:376.1px;font-size:6.2px;color:#2a2a2a;font-weight:normal;letter-spacing:-0.2px">mm</div>
<div class="t" style="left:110.69999999999999px;top:407.7px;font-size:7.75px;color:#303030;font-weight:bold;">钢网厚度</div>
<div class="trk" style="left:148.5px;top:405.9px;width:148.5px"></div>
<div class="ticks" style="left:151px;top:415.4px;width:145px"></div>
<svg class="a" style="left:194.8px;top:403.4px" width="8" height="11" viewBox="0 0 8 11"><path d="M0.5,1.2 Q0.5,0.5 1.2,0.5 H6.3 Q7,0.5 7,1.2 V7.5 L3.75,10.3 L0.5,7.5 Z" fill="url(#tg)" stroke="#858585" stroke-width="0.9"/></svg>
<div class="ed" style="left:305.8px;top:404.9px;width:37px;height:12px"><span>0.100</span></div>
<div class="t" style="left:347.2px;top:408.7px;font-size:6.2px;color:#2a2a2a;font-weight:normal;letter-spacing:-0.2px">mm</div>
<div class="a" style="left:370px;top:152px;width:1px;height:97.5px;background:#e4e4e4"></div>
<div class="a" style="left:370px;top:258.5px;width:1px;height:98.5px;background:#e4e4e4"></div>
<div class="a" style="left:370px;top:366px;width:1px;height:64px;background:#e4e4e4"></div>
<div class="a" style="left:373px;top:147.7px;width:27px;height:10px;background:#f2f2f2"></div>
<div class="t" style="left:375.8px;top:149.5px;font-size:7.7px;color:#141414;font-weight:500;">值设定</div>
<svg class="a" style="left:431.6px;top:150.89999999999998px" width="8" height="8" viewBox="0 0 8 8"><rect x="0.5" y="0.5" width="7" height="7" fill="url(#cbgn)" stroke="#a5a5a5" stroke-width="1"/><path d="M2,4 L3.4,5.9 L6.1,1.6" fill="none" stroke="#26388e" stroke-width="1.1"/></svg>
<div class="a" style="left:373px;top:253.7px;width:27px;height:10px;background:#f2f2f2"></div>
<div class="t" style="left:375.8px;top:255.5px;font-size:7.7px;color:#141414;font-weight:500;">检测项</div>
<svg class="a" style="left:431.6px;top:256.9px" width="8" height="8" viewBox="0 0 8 8"><rect x="0.5" y="0.5" width="7" height="7" fill="url(#cbgn)" stroke="#a5a5a5" stroke-width="1"/></svg>
<div class="a" style="left:373px;top:361.4px;width:27px;height:10px;background:#f2f2f2"></div>
<div class="t" style="left:375.8px;top:363.2px;font-size:7.7px;color:#141414;font-weight:500;">保存项</div>
<svg class="a" style="left:431.6px;top:364.59999999999997px" width="8" height="8" viewBox="0 0 8 8"><rect x="0.5" y="0.5" width="7" height="7" fill="url(#cbgn)" stroke="#a5a5a5" stroke-width="1"/></svg>
<svg class="a" style="left:374.2px;top:160.0px" width="8" height="8" viewBox="0 0 8 8"><rect x="0.5" y="0.5" width="7" height="7" fill="url(#cbgn)" stroke="#a5a5a5" stroke-width="1"/><path d="M2,4 L3.4,5.9 L6.1,1.6" fill="none" stroke="#26388e" stroke-width="1.1"/></svg>
<div class="t" style="left:385px;top:160.8px;font-size:7.7px;color:#141414;font-weight:500;">高度</div>
<svg class="a" style="left:374.2px;top:173.15px" width="8" height="8" viewBox="0 0 8 8"><rect x="0.5" y="0.5" width="7" height="7" fill="url(#cbgn)" stroke="#a5a5a5" stroke-width="1"/><path d="M2,4 L3.4,5.9 L6.1,1.6" fill="none" stroke="#26388e" stroke-width="1.1"/></svg>
<div class="t" style="left:385px;top:174.0px;font-size:7.7px;color:#141414;font-weight:500;">面积</div>
<svg class="a" style="left:374.2px;top:186.3px" width="8" height="8" viewBox="0 0 8 8"><rect x="0.5" y="0.5" width="7" height="7" fill="url(#cbgn)" stroke="#a5a5a5" stroke-width="1"/><path d="M2,4 L3.4,5.9 L6.1,1.6" fill="none" stroke="#26388e" stroke-width="1.1"/></svg>
<div class="t" style="left:385px;top:187.2px;font-size:7.7px;color:#141414;font-weight:500;">体积</div>
<svg class="a" style="left:374.2px;top:199.45px" width="8" height="8" viewBox="0 0 8 8"><rect x="0.5" y="0.5" width="7" height="7" fill="url(#cbgn)" stroke="#a5a5a5" stroke-width="1"/><path d="M2,4 L3.4,5.9 L6.1,1.6" fill="none" stroke="#26388e" stroke-width="1.1"/></svg>
<div class="t" style="left:385px;top:200.3px;font-size:7.7px;color:#141414;font-weight:500;">偏移</div>
<svg class="a" style="left:374.2px;top:212.6px" width="8" height="8" viewBox="0 0 8 8"><rect x="0.5" y="0.5" width="7" height="7" fill="url(#cbgn)" stroke="#a5a5a5" stroke-width="1"/><path d="M2,4 L3.4,5.9 L6.1,1.6" fill="none" stroke="#26388e" stroke-width="1.1"/></svg>
<div class="t" style="left:385px;top:213.4px;font-size:7.7px;color:#141414;font-weight:500;">锡型</div>
<svg class="a" style="left:374.2px;top:225.75px" width="8" height="8" viewBox="0 0 8 8"><rect x="0.5" y="0.5" width="7" height="7" fill="url(#cbgn)" stroke="#a5a5a5" stroke-width="1"/><path d="M2,4 L3.4,5.9 L6.1,1.6" fill="none" stroke="#26388e" stroke-width="1.1"/></svg>
<div class="t" style="left:385px;top:226.6px;font-size:7.7px;color:#141414;font-weight:500;">钢网厚度</div>
<svg class="a" style="left:374.2px;top:238.9px" width="8" height="8" viewBox="0 0 8 8"><rect x="0.5" y="0.5" width="7" height="7" fill="url(#cbgn)" stroke="#a5a5a5" stroke-width="1"/><path d="M2,4 L3.4,5.9 L6.1,1.6" fill="none" stroke="#26388e" stroke-width="1.1"/></svg>
<div class="t" style="left:385px;top:239.8px;font-size:7.7px;color:#141414;font-weight:500;">桥接</div>
<svg class="a" style="left:374.2px;top:267.5px" width="8" height="8" viewBox="0 0 8 8"><rect x="0.5" y="0.5" width="7" height="7" fill="url(#cbgn)" stroke="#a5a5a5" stroke-width="1"/><path d="M2,4 L3.4,5.9 L6.1,1.6" fill="none" stroke="#26388e" stroke-width="1.1"/></svg>
<div class="t" style="left:385px;top:268.3px;font-size:7.7px;color:#141414;font-weight:500;">高度</div>
<svg class="a" style="left:374.2px;top:280.6px" width="8" height="8" viewBox="0 0 8 8"><rect x="0.5" y="0.5" width="7" height="7" fill="url(#cbgn)" stroke="#a5a5a5" stroke-width="1"/><path d="M2,4 L3.4,5.9 L6.1,1.6" fill="none" stroke="#26388e" stroke-width="1.1"/></svg>
<div class="t" style="left:385px;top:281.4px;font-size:7.7px;color:#141414;font-weight:500;">面积</div>
<svg class="a" style="left:374.2px;top:293.4px" width="8" height="8" viewBox="0 0 8 8"><rect x="0.5" y="0.5" width="7" height="7" fill="url(#cbgn)" stroke="#a5a5a5" stroke-width="1"/><path d="M2,4 L3.4,5.9 L6.1,1.6" fill="none" stroke="#26388e" stroke-width="1.1"/></svg>
<div class="t" style="left:385px;top:294.2px;font-size:7.7px;color:#141414;font-weight:500;">体积</div>
<svg class="a" style="left:374.2px;top:306.6px" width="8" height="8" viewBox="0 0 8 8"><rect x="0.5" y="0.5" width="7" height="7" fill="url(#cbgn)" stroke="#a5a5a5" stroke-width="1"/><path d="M2,4 L3.4,5.9 L6.1,1.6" fill="none" stroke="#26388e" stroke-width="1.1"/></svg>
<div class="t" style="left:385px;top:307.4px;font-size:7.7px;color:#141414;font-weight:500;">偏移</div>
<svg class="a" style="left:374.2px;top:319.4px" width="8" height="8" viewBox="0 0 8 8"><rect x="0.5" y="0.5" width="7" height="7" fill="url(#cbgn)" stroke="#a5a5a5" stroke-width="1"/><path d="M2,4 L3.4,5.9 L6.1,1.6" fill="none" stroke="#26388e" stroke-width="1.1"/></svg>
<div class="t" style="left:385px;top:320.2px;font-size:7.7px;color:#141414;font-weight:500;">锡型</div>
<svg class="a" style="left:374.2px;top:345.8px" width="8" height="8" viewBox="0 0 8 8"><rect x="0.5" y="0.5" width="7" height="7" fill="url(#cbgn)" stroke="#a5a5a5" stroke-width="1"/><path d="M2,4 L3.4,5.9 L6.1,1.6" fill="none" stroke="#26388e" stroke-width="1.1"/></svg>
<div class="t" style="left:385px;top:346.6px;font-size:7.7px;color:#141414;font-weight:500;">桥接</div>
<svg class="a" style="left:374.2px;top:375.8px" width="8" height="8" viewBox="0 0 8 8"><rect x="0.5" y="0.5" width="7" height="7" fill="url(#cbgn)" stroke="#a5a5a5" stroke-width="1"/></svg>
<div class="t" style="left:385px;top:376.6px;font-size:7.7px;color:#141414;font-weight:500;">高度</div>
<svg class="a" style="left:374.2px;top:388.7px" width="8" height="8" viewBox="0 0 8 8"><rect x="0.5" y="0.5" width="7" height="7" fill="url(#cbgn)" stroke="#a5a5a5" stroke-width="1"/></svg>
<div class="t" style="left:385px;top:389.5px;font-size:7.7px;color:#141414;font-weight:500;">面积</div>
<svg class="a" style="left:374.2px;top:401.4px" width="8" height="8" viewBox="0 0 8 8"><rect x="0.5" y="0.5" width="7" height="7" fill="url(#cbgn)" stroke="#a5a5a5" stroke-width="1"/></svg>
<div class="t" style="left:385px;top:402.2px;font-size:7.7px;color:#141414;font-weight:500;">体积</div>
<svg class="a" style="left:374.2px;top:414.2px" width="8" height="8" viewBox="0 0 8 8"><rect x="0.5" y="0.5" width="7" height="7" fill="url(#cbgn)" stroke="#a5a5a5" stroke-width="1"/></svg>
<div class="t" style="left:385px;top:415.0px;font-size:7.7px;color:#141414;font-weight:500;">偏移</div>
</body></html>
